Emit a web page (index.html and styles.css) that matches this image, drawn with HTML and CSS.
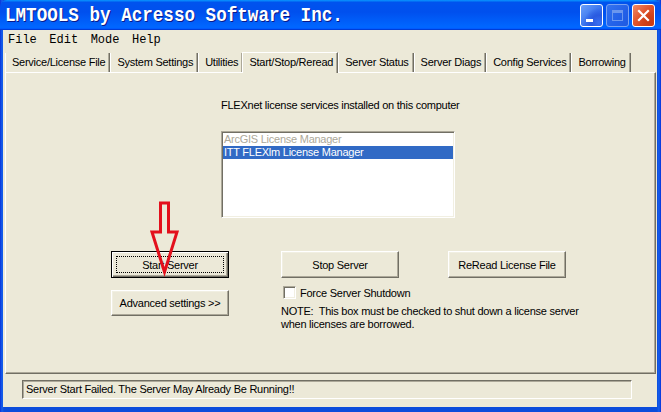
FILE: index.html
```html
<!DOCTYPE html>
<html>
<head>
<meta charset="utf-8">
<link rel="stylesheet" href="styles.css">
</head>
<body>
<div class="window">
  <div class="titlebar">
    <span class="title">LMTOOLS by Acresso Software Inc.</span>
    <div class="wincontrols">
      <span class="wbtn wmin"><span class="glyph-min"></span></span>
      <span class="wbtn wmax"><span class="glyph-max"></span></span>
      <span class="wbtn wclose">
        <svg width="21" height="21" viewBox="0 0 21 21"><path d="M6 6 L15 15 M15 6 L6 15" stroke="#fff" stroke-width="2.2" stroke-linecap="square"/></svg>
      </span>
    </div>
  </div>
  <div class="frame">
    <div class="menubar">
      <span class="menu">File</span>
      <span class="menu">Edit</span>
      <span class="menu">Mode</span>
      <span class="menu">Help</span>
    </div>
    <div class="tabs">
      <span class="tab">Service/License File</span>
      <span class="tab">System Settings</span>
      <span class="tab">Utilities</span>
      <span class="tab active">Start/Stop/Reread</span>
      <span class="tab">Server Status</span>
      <span class="tab">Server Diags</span>
      <span class="tab">Config Services</span>
      <span class="tab">Borrowing</span>
    </div>
    <div class="panel">
      <div class="services">
        <div class="services-label">FLEXnet license services installed on this computer</div>
        <div class="listbox">
          <div class="item disabled">ArcGIS License Manager</div>
          <div class="item selected">ITT FLEXlm License Manager</div>
        </div>
      </div>
      <div class="controls">
        <button class="btn default"><span class="focus">Start Server</span></button>
        <button class="btn">Stop Server</button>
        <button class="btn">ReRead License File</button>
        <button class="btn adv">Advanced settings &gt;&gt;</button>
        <div class="options">
          <label class="check"><span class="box"></span>Force Server Shutdown</label>
          <p class="note">NOTE:&nbsp; This box must be checked to shut down a license server<br>when licenses are borrowed.</p>
        </div>
      </div>
      <svg class="arrow" width="32" height="76" viewBox="0 0 32 76">
        <polygon points="10.5,2 18.5,2 18.5,31 27,31 14.5,71 2,31 10.5,31" fill="none" stroke="#e3101c" stroke-width="3" stroke-linejoin="miter"/>
      </svg>
    </div>
    <div class="statusarea">
      <div class="status">Server Start Failed. The Server May Already Be Running!!</div>
    </div>
  </div>
</div>
</body>
</html>
```

FILE: styles.css
```css
html, body {
  margin: 0;
  padding: 0;
}
body {
  width: 661px;
  height: 412px;
  overflow: hidden;
  font-family: "Liberation Sans", Arial, sans-serif;
  font-size: 11px;
  letter-spacing: -0.25px;
  color: #000;
  background: #0b4cdb;
}
.window {
  height: 412px;
  display: flex;
  flex-direction: column;
  background: linear-gradient(90deg, #0831d9 0, #1660ec 2px, #0b4cdb 4px, #0b4cdb 657px, #1660ec 659px, #0831d9 661px);
}
.titlebar {
  height: 30px;
  flex: none;
  display: flex;
  align-items: center;
  justify-content: space-between;
  background: linear-gradient(180deg, #0997ff 0, #0053ee 8%, #0050ee 40%, #0066ff 88%, #0066ff 93%, #005bff 95%, #003dd7 96%, #003dd7 100%);
  border-radius: 7px 7px 0 0;
}
.title {
  font-family: "Liberation Mono", "Courier New", monospace;
  font-weight: bold;
  font-size: 17.6px;
  letter-spacing: 0;
  color: #fff;
  margin-left: 5px;
  text-shadow: 1px 1px #0a1a8a;
  display: inline-block;
  transform: scaleY(1.2);
  transform-origin: left center;
}
.wincontrols {
  display: flex;
  gap: 3px;
  margin-right: 6px;
  margin-top: 1px;
}
.wbtn {
  width: 21px;
  height: 21px;
  border: 1px solid #fff;
  border-radius: 3px;
  box-sizing: content-box;
  position: relative;
  display: block;
}
.wmin {
  background: radial-gradient(circle at 85% 85%, #3a6ff0 0, #2a5ae0 30%, transparent 60%), linear-gradient(135deg, #6aa0fa 0, #3a74ee 55%, #2456dc 100%);
}
.glyph-min {
  position: absolute;
  left: 5px;
  top: 14px;
  width: 7px;
  height: 3px;
  background: #fff;
}
.wmax {
  border-color: #8fb0f2;
  background: linear-gradient(135deg, #3d7af0 0, #2a62e6 60%, #2459dd 100%);
  opacity: 0.85;
}
.glyph-max {
  position: absolute;
  left: 5px;
  top: 5px;
  border: 1px solid #7ea3ee;
  border-top-width: 3px;
  box-sizing: border-box;
  width: 11px;
  height: 11px;
}
.wclose {
  background: radial-gradient(circle at 80% 80%, #c83b14 0, transparent 55%), linear-gradient(135deg, #f08a68 0, #e2552d 45%, #cf3d13 100%);
}
.wclose svg {
  display: block;
}
.frame {
  flex: 1;
  display: flex;
  flex-direction: column;
  margin: 0 4px 5px 3px;
  background: #ece9d8;
}
.menubar {
  height: 20px;
  flex: none;
  display: flex;
  align-items: center;
  padding-left: 5px;
  gap: 12.5px;
  font-family: "Liberation Mono", "Courier New", monospace;
  font-size: 12px;
  letter-spacing: 0;
}
.tabs {
  height: 22px;
  flex: none;
  display: flex;
  align-items: flex-end;
  padding-left: 2px;
  position: relative;
  z-index: 1;
}
.tab {
  height: 19px;
  line-height: 18px;
  padding: 0 4px 0 6px;
  border-left: 1px solid #fff;
  border-right: 1px solid #716f64;
  box-shadow: inset -1px 0 #aca899;
  white-space: nowrap;
  box-sizing: border-box;
}
.tab.active {
  height: 21px;
  line-height: 19px;
  border-top: 1px solid #fff;
  margin-bottom: -1px;
  background: #ece9d8;
  padding: 0 4px 0 6px;
  margin-left: -1px;
}
.panel {
  flex: 1;
  position: relative;
  margin: 0 1px 0 2px;
  border-top: 1px solid #fff;
  border-left: 1px solid #fff;
  border-right: 1px solid #716f64;
  border-bottom: 1px solid #716f64;
  box-shadow: inset -1px -1px #aca899;
  padding-top: 26px;
}
.services {
  margin-left: 215px;
  width: 234px;
}
.services-label {
  height: 13px;
  line-height: 13px;
  white-space: nowrap;
}
.listbox {
  margin-top: 19px;
  height: 87px;
  box-sizing: border-box;
  background: #fff;
  border-top: 1px solid #aca899;
  border-left: 1px solid #aca899;
  border-right: 1px solid #fff;
  border-bottom: 1px solid #fff;
  box-shadow: inset 1px 1px #716f64, inset -1px -1px #f1efe2;
  padding: 1px;
}
.item {
  height: 13px;
  line-height: 13px;
  padding-left: 1px;
  white-space: nowrap;
}
.item.disabled {
  color: #aca899;
}
.item.selected {
  background: #316ac5;
  color: #fff;
}
.controls {
  margin-top: 33px;
  margin-left: 105px;
  display: grid;
  grid-template-columns: 170px 167px 119px;
  align-items: start;
}
.btn {
  box-sizing: border-box;
  width: 118px;
  height: 27px;
  margin: 0;
  padding: 0;
  font-family: "Liberation Sans", Arial, sans-serif;
  font-size: 11px;
  letter-spacing: -0.25px;
  color: #000;
  background: #ece9d8;
  border: 1px solid;
  border-color: #fff #716f64 #716f64 #fff;
  box-shadow: inset -1px -1px #aca899, inset 1px 1px #f1efe2;
  border-radius: 0;
}
.btn.default {
  border-color: #000;
  box-shadow: inset 1px 1px #fff, inset -1px -1px #716f64, inset -2px -2px #aca899;
  position: relative;
}
.btn.default .focus {
  position: absolute;
  left: 4px;
  right: 4px;
  top: 4px;
  bottom: 4px;
  border: 1px dotted #000;
  display: flex;
  align-items: center;
  justify-content: center;
}
.btn.adv {
  height: 26px;
  margin-top: 12px;
}
.options {
  grid-column: 2 / 4;
  margin-top: 8px;
}
.check {
  display: flex;
  align-items: center;
  height: 13px;
  margin-left: 2px;
  white-space: nowrap;
}
.box {
  width: 13px;
  height: 13px;
  box-sizing: border-box;
  background: #fff;
  border-top: 1px solid #aca899;
  border-left: 1px solid #aca899;
  border-right: 1px solid #fff;
  border-bottom: 1px solid #fff;
  box-shadow: inset 1px 1px #716f64, inset -1px -1px #f1efe2;
  margin-right: 4px;
}
.note {
  margin: 6px 0 0 0;
  line-height: 13px;
  white-space: nowrap;
}
.arrow {
  position: absolute;
  left: 144px;
  top: 128px;
}
.statusarea {
  flex: none;
  height: 33px;
  box-sizing: border-box;
  padding: 6px 0 0 19px;
}
.status {
  width: 610px;
  height: 19px;
  box-sizing: border-box;
  border-top: 1px solid #716f64;
  border-left: 1px solid #716f64;
  border-right: 1px solid #fff;
  border-bottom: 1px solid #fff;
  box-shadow: inset 1px 1px #aca899;
  line-height: 17px;
  padding-left: 3px;
  white-space: nowrap;
}
```
